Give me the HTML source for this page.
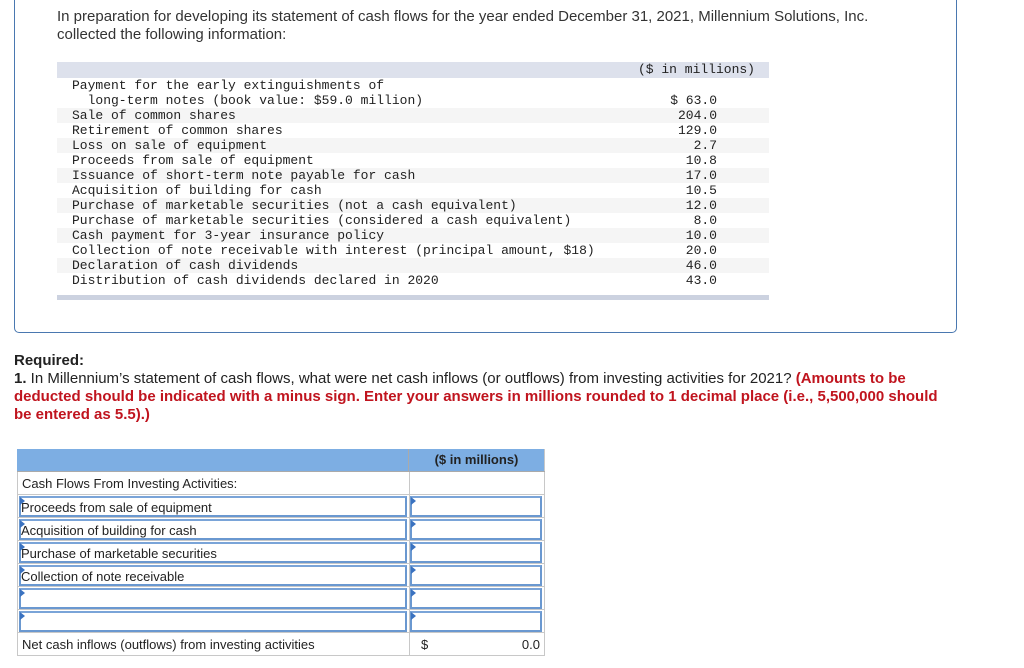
<!DOCTYPE html>
<html><head><meta charset="utf-8"><style>
body{margin:0;width:1024px;height:668px;background:#fff;position:relative;overflow:hidden;font-family:"Liberation Sans",sans-serif;color:#222}
.a{position:absolute}
.box{left:14px;top:-10px;width:941px;height:341px;border:1px solid #4a78b0;border-radius:5px}
.intro{left:57px;top:8px;font-size:15px;line-height:18px;color:#333}
.mono{font-family:"Liberation Mono",monospace;font-size:13px;color:#222}
.dt{left:57px;top:62px;width:712px}
.hdr{height:16px;background:#dde1ec;position:relative}
.r{height:15px;line-height:15px;position:relative;white-space:pre}
.r.g{background:#f5f5f5}
.r .l{position:absolute;left:15px}
.r .v{position:absolute;right:52px}
.req{left:14px;top:352px;font-size:15px;line-height:18px;color:#222;width:935px}
.red{color:#c0141e;font-weight:bold}
.at{left:17px;top:449px;width:528px}
.row{position:relative;height:22px;border-bottom:1px solid #c8c8c8;font-size:13px}
.c1{position:absolute;left:0;top:0;width:391px;height:22px;border-left:1px solid #c8c8c8;border-right:1px solid #c8c8c8}
.c2{position:absolute;left:392px;top:0;width:135px;height:22px;border-right:1px solid #c8c8c8}
.inp{position:absolute;top:1px;bottom:0;left:1px;right:2px;border:2px solid #6a98d0;border-top-color:#7aa4d8}
.inp:before{content:"";position:absolute;left:-1px;top:-1px;border-left:5px solid #3a72c0;border-top:4px solid transparent;border-bottom:4px solid transparent}
.t{position:absolute;left:4px;top:4px}
</style></head><body>
<div class="a box"></div>
<div class="a intro">In preparation for developing its statement of cash flows for the year ended December 31, 2021, Millennium Solutions, Inc.<br>collected the following information:</div>
<div class="a dt mono">
<div class="hdr"><span style="position:absolute;right:14px;top:0;line-height:16px">($ in millions)</span></div>
<div class="r"><span class="l">Payment for the early extinguishments of</span></div>
<div class="r"><span class="l">  long-term notes (book value: $59.0 million)</span><span class="v">$ 63.0</span></div>
<div class="r g"><span class="l">Sale of common shares</span><span class="v">204.0</span></div>
<div class="r"><span class="l">Retirement of common shares</span><span class="v">129.0</span></div>
<div class="r g"><span class="l">Loss on sale of equipment</span><span class="v">2.7</span></div>
<div class="r"><span class="l">Proceeds from sale of equipment</span><span class="v">10.8</span></div>
<div class="r g"><span class="l">Issuance of short-term note payable for cash</span><span class="v">17.0</span></div>
<div class="r"><span class="l">Acquisition of building for cash</span><span class="v">10.5</span></div>
<div class="r g"><span class="l">Purchase of marketable securities (not a cash equivalent)</span><span class="v">12.0</span></div>
<div class="r"><span class="l">Purchase of marketable securities (considered a cash equivalent)</span><span class="v">8.0</span></div>
<div class="r g"><span class="l">Cash payment for 3-year insurance policy</span><span class="v">10.0</span></div>
<div class="r"><span class="l">Collection of note receivable with interest (principal amount, $18)</span><span class="v">20.0</span></div>
<div class="r g"><span class="l">Declaration of cash dividends</span><span class="v">46.0</span></div>
<div class="r"><span class="l">Distribution of cash dividends declared in 2020</span><span class="v">43.0</span></div>
<div style="height:7px"></div>
<div style="height:5px;background:#ccd2e0"></div>
</div>
<div class="a req"><b>Required:</b><br><b>1.</b> In Millennium’s statement of cash flows, what were net cash inflows (or outflows) from investing activities for 2021? <span class="red">(Amounts to be deducted should be indicated with a minus sign. Enter your answers in millions rounded to 1 decimal place (i.e., 5,500,000 should be entered as 5.5).)</span></div>
<div class="a at">
<div class="row" style="background:#7daee3;border-bottom-color:#aaa"><div class="c2" style="border-left:1px solid #aaa;left:391px;text-align:center;font-weight:bold;line-height:22px">($ in millions)</div></div>
<div class="row"><div class="c1"><span class="t">Cash Flows From Investing Activities:</span></div><div class="c2"></div></div>
<div class="row"><div class="c1"><div class="inp"><span class="t" style="left:0;top:2px">Proceeds from sale of equipment</span></div></div><div class="c2"><div class="inp"></div></div></div>
<div class="row"><div class="c1"><div class="inp"><span class="t" style="left:0;top:2px">Acquisition of building for cash</span></div></div><div class="c2"><div class="inp"></div></div></div>
<div class="row"><div class="c1"><div class="inp"><span class="t" style="left:0;top:2px">Purchase of marketable securities</span></div></div><div class="c2"><div class="inp"></div></div></div>
<div class="row"><div class="c1"><div class="inp"><span class="t" style="left:0;top:2px">Collection of note receivable</span></div></div><div class="c2"><div class="inp"></div></div></div>
<div class="row"><div class="c1"><div class="inp"></div></div><div class="c2"><div class="inp"></div></div></div>
<div class="row"><div class="c1"><div class="inp"></div></div><div class="c2"><div class="inp"></div></div></div>
<div class="row"><div class="c1"><span class="t">Net cash inflows (outflows) from investing activities</span></div><div class="c2"><span class="t" style="left:12px">$</span><span class="t" style="left:auto;right:4px">0.0</span></div></div>
</div>
</body></html>
